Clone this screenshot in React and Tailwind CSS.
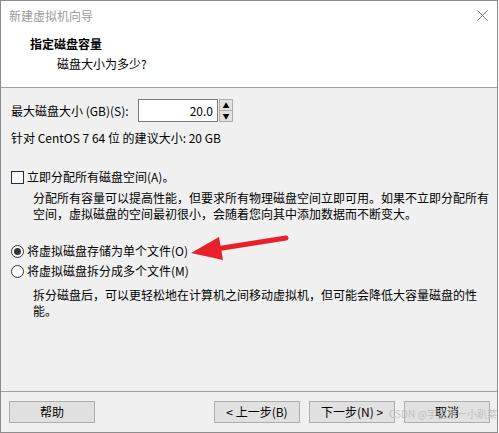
import React from "react";

const font = { fontFamily: '"Noto Sans CJK SC", "Noto Sans", sans-serif' };

function Button({ children, className = "" }) {
  return (
    <div
      className={`h-[22px] border border-[#adadad] bg-[#e1e1e1] flex items-center justify-center text-[12px] leading-[16px] text-black ${className}`}
    >
      {children}
    </div>
  );
}

function Radio({ checked }) {
  return (
    <div className="w-[13px] h-[13px] rounded-full border border-[#333333] bg-white flex items-center justify-center">
      {checked && <div className="w-[7px] h-[7px] rounded-full bg-[#333333]" />}
    </div>
  );
}

export default function App() {
  return (
    <div
      className="relative w-[498px] h-[433px] border border-[#8c8c8c] bg-[#f0f0f0] flex flex-col text-black overflow-hidden"
      style={font}
    >
      <div className="bg-white h-[29px] pl-2 pr-[9px] flex items-center justify-between">
        <span className="text-[12px] text-[#9a9a9a]">新建虚拟机向导</span>
        <svg width="11" height="11" viewBox="0 0 11 11">
          <path d="M0.5 0.5 L10.5 10.5 M10.5 0.5 L0.5 10.5" stroke="#7a7a7a" strokeWidth="1" />
        </svg>
      </div>

      <div className="bg-white h-[58px] border-b border-[#a0a0a0] pt-[6px]">
        <div className="pl-[29px] text-[12px] leading-[16px] font-bold">指定磁盘容量</div>
        <div className="pl-[56px] mt-[4px] text-[12px] leading-[16px]">磁盘大小为多少?</div>
      </div>

      <div className="flex-1 pl-[10px] text-[12px] leading-[16px] whitespace-nowrap">
        <div className="flex items-center mt-[11px] h-[23px]">
          <span className="w-[127px]">最大磁盘大小 (GB)(S):</span>
          <div className="w-[80px] h-[23px] border border-[#7a7a7a] bg-white flex items-center justify-end pr-[4px]">
            20.0
          </div>
          <div className="ml-[1px] w-[14px] h-[23px] flex flex-col border border-[#adadad] bg-[#e1e1e1]">
            <div className="flex-1 flex items-center justify-center border-b border-[#adadad] text-[7px] leading-none">▲</div>
            <div className="flex-1 flex items-center justify-center text-[7px] leading-none">▼</div>
          </div>
        </div>
        <div className="mt-[8px]">针对 CentOS 7 64 位 的建议大小: 20 GB</div>

        <div className="flex items-center gap-[3px] mt-[23px]">
          <div className="w-[13px] h-[13px] border border-[#1f2f3f] bg-white" />
          <span>立即分配所有磁盘空间(A)。</span>
        </div>
        <div className="pl-[22px] mt-[5px]">
          <div>分配所有容量可以提高性能，但要求所有物理磁盘空间立即可用。如果不立即分配所有</div>
          <div>空间，虚拟磁盘的空间最初很小，会随着您向其中添加数据而不断变大。</div>
        </div>

        <div className="flex items-center gap-[3px] mt-[21px]">
          <Radio checked />
          <span>将虚拟磁盘存储为单个文件(O)</span>
        </div>
        <div className="flex items-center gap-[3px] mt-[4px]">
          <Radio />
          <span>将虚拟磁盘拆分成多个文件(M)</span>
        </div>
        <div className="pl-[22px] mt-[8px]">
          <div>拆分磁盘后，可以更轻松地在计算机之间移动虚拟机，但可能会降低大容量磁盘的性</div>
          <div>能。</div>
        </div>
      </div>

      <div className="h-[41px] border-t border-[#a0a0a0] flex items-start pt-[9px] pl-[8px]">
        <Button className="w-[86px]">帮助</Button>
        <Button className="w-[86px] ml-[119px]">&lt; 上一步(B)</Button>
        <Button className="w-[86px] ml-[9px]">下一步(N) &gt;</Button>
        <Button className="w-[86px] ml-[9px]">取消</Button>
      </div>

      <div className="absolute left-[388px] top-[405px] text-[10px] leading-[16px] text-[#b8b8b8] opacity-80 whitespace-nowrap pointer-events-none">
        CSDN @宇宙第一小趴菜
      </div>

      <svg className="absolute left-0 top-0 pointer-events-none" width="498" height="433">
        <line x1="285" y1="237" x2="215" y2="248" stroke="#e8202a" strokeWidth="5" strokeLinecap="round" />
        <polygon points="190,252 218,236 222,259" fill="#e8202a" />
      </svg>
    </div>
  );
}
